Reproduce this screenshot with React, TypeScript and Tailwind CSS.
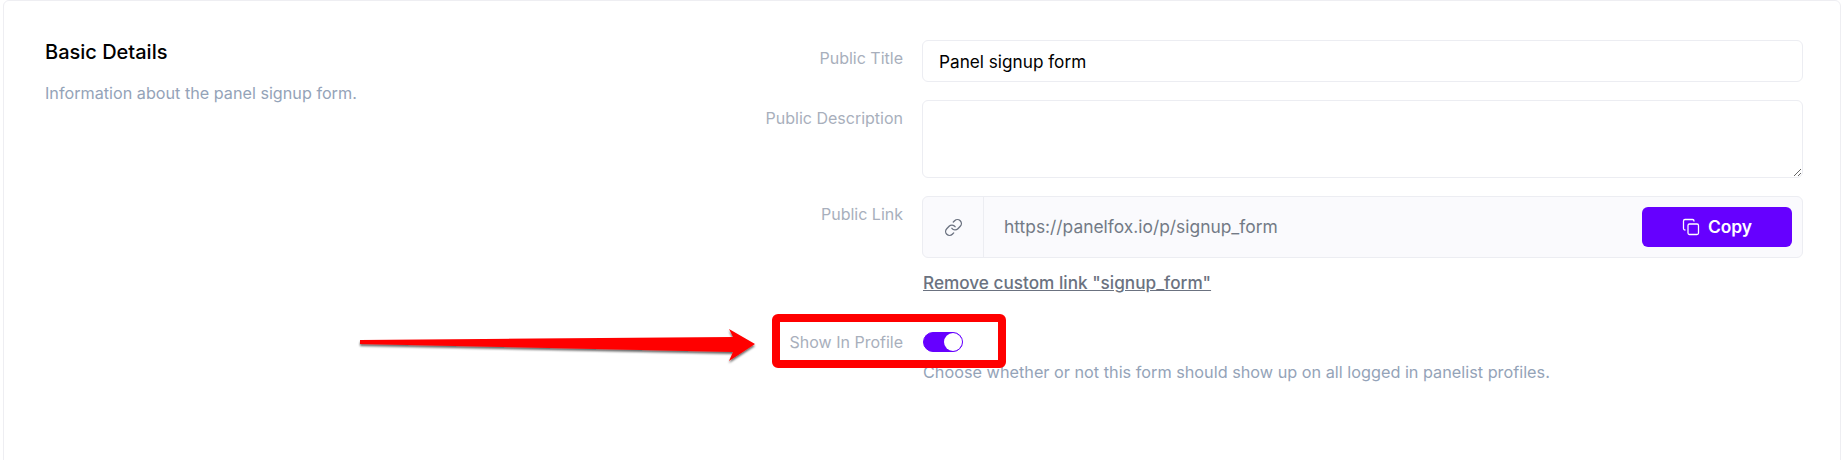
import { Copy, Link } from "lucide-react";

function FieldLabel({ children, className = "" }: { children: React.ReactNode; className?: string }) {
  return (
    <label className={`w-[230px] shrink-0 text-right text-[16px] leading-6 text-[#a8afbc] ${className}`}>
      {children}
    </label>
  );
}

function Arrow() {
  return (
    <svg className="pointer-events-none absolute left-[350px] top-[320px]" width="415" height="50" viewBox="0 0 415 50">
      <defs>
        <filter id="arrow-shadow" x="-5%" y="-30%" width="110%" height="170%">
          <feDropShadow dx="0" dy="2" stdDeviation="1.2" floodColor="#000" floodOpacity="0.6" />
        </filter>
      </defs>
      <polygon
        points="10,20 383,17 379,9 405,24 379,41 383,32 10,24"
        fill="#ff0000"
        filter="url(#arrow-shadow)"
      />
    </svg>
  );
}

export default function App() {
  return (
    <div className="relative h-[460px] w-[1841px] overflow-hidden bg-white font-['Inter',sans-serif]">
      <div className="ml-[3px] h-[470px] rounded-[6px] border border-[#eeeef2] px-[41px] pt-[39px]">
        <div className="flex">
          <div className="-mt-[1px] w-[628px] shrink-0">
            <h2 className="text-[20px] leading-[26px] font-medium text-black">Basic Details</h2>
            <p className="mt-[16px] text-[16.2px] leading-6 text-[#94a3b8]">Information about the panel signup form.</p>
          </div>

          <div className="flex w-[1132px] flex-col">
            <div className="flex gap-[19px]">
              <FieldLabel className="pt-[6px]">Public Title</FieldLabel>
              <input
                readOnly
                value="Panel signup form"
                className="h-[42px] w-[881px] rounded-[6px] border border-[#ecedf2] bg-white px-[16px] text-[17.2px] text-black outline-none"
              />
            </div>

            <div className="mt-[18px] flex gap-[19px]">
              <FieldLabel className="pt-[6px]">Public Description</FieldLabel>
              <textarea
                readOnly
                className="block h-[78px] w-[881px] rounded-[6px] border border-[#ecedf2] bg-white px-[16px] py-2 outline-none"
              />
            </div>

            <div className="mt-[18px] flex gap-[19px]">
              <FieldLabel className="pt-[6px]">Public Link</FieldLabel>
              <div className="w-[881px]">
                <div className="flex h-[62px] items-center rounded-[6px] border border-[#ecedf2] bg-[#fafafd]">
                  <div className="flex h-full w-[61px] items-center justify-center border-r border-[#ecedf2]">
                    <Link className="text-[#6b7280]" size={19} strokeWidth={1.7} />
                  </div>
                  <span className="ml-[20px] flex-1 text-[17.4px] text-[#737a86]">https://panelfox.io/p/signup_form</span>
                  <button
                    type="button"
                    className="mr-[10px] flex h-[40px] w-[150px] items-center justify-center gap-[8px] rounded-[6px] bg-[#6600ff] text-[17.4px] font-semibold text-white"
                  >
                    <Copy size={18} strokeWidth={1.7} />
                    Copy
                  </button>
                </div>
                <a className="mt-[14px] ml-[1px] block text-[17.2px] leading-[22px] font-medium text-[#6b7280] underline">
                  Remove custom link "signup_form"
                </a>
              </div>
            </div>

            <div className="mt-[36px] flex gap-[19px]">
              <FieldLabel>Show In Profile</FieldLabel>
              <div>
                <div className="ml-[1px] mt-[2px] flex h-5 w-[40px] items-center justify-end rounded-full border border-[#6600ff] bg-[#6600ff]">
                  <span className="h-[18px] w-[18px] rounded-full bg-white" />
                </div>
                <p className="mt-[8px] ml-[1px] text-[16.25px] leading-6 text-[#94a3b8]">
                  Choose whether or not this form should show up on all logged in panelist profiles.
                </p>
              </div>
            </div>
          </div>
        </div>
      </div>

      <div className="pointer-events-none absolute left-[772px] top-[314px] h-[54px] w-[234px] rounded-[6px] border-8 border-[#ff0000]" />
      <Arrow />
    </div>
  );
}
